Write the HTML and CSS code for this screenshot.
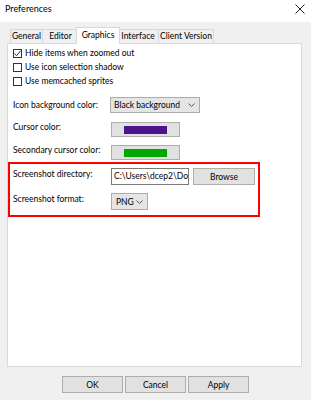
FILE: index.html
```html
<!DOCTYPE html>
<html>
<head>
<meta charset="utf-8">
<link rel="stylesheet" href="styles.css">
</head>
<body>
<div class="window">
  <div class="titlebar">
    <span class="title">Preferences</span>
    <svg class="close" width="10" height="10" viewBox="0 0 10 10"><path d="M0.5 0.5 L9.5 9.5 M9.5 0.5 L0.5 9.5" stroke="#222" stroke-width="1" fill="none"/></svg>
  </div>
  <div class="client">
    <div class="tabs">
      <div class="tab t-general">General</div>
      <div class="tab t-editor">Editor</div>
      <div class="tab t-graphics active">Graphics</div>
      <div class="tab t-interface">Interface</div>
      <div class="tab t-client">Client Version</div>
    </div>
    <div class="panel">
      <div class="check-row">
        <span class="checkbox"><svg width="9" height="9" viewBox="0 0 9 9"><path d="M1.5 4.5 L3.5 6.8 L7.8 1.6" stroke="#333" stroke-width="1" fill="none"/></svg></span>
        <span>Hide items when zoomed out</span>
      </div>
      <div class="check-row">
        <span class="checkbox"></span>
        <span>Use icon selection shadow</span>
      </div>
      <div class="check-row">
        <span class="checkbox"></span>
        <span>Use memcached sprites</span>
      </div>

      <div class="form-row row-icon">
        <span class="label">Icon background color:</span>
        <div class="combo combo-wide"><span class="combo-text">Black background</span><svg class="chev" width="7" height="4" viewBox="0 0 7 4"><path d="M0.5 0.5 L3.5 3.5 L6.5 0.5" stroke="#555" fill="none"/></svg></div>
      </div>
      <div class="form-row row-cursor">
        <span class="label">Cursor color:</span>
        <div class="btn color-btn"><span class="swatch purple"></span></div>
      </div>
      <div class="form-row row-second">
        <span class="label">Secondary cursor color:</span>
        <div class="btn color-btn"><span class="swatch green"></span></div>
      </div>

      <div class="highlight">
        <div class="form-row row-dir">
          <span class="label">Screenshot directory:</span>
          <div class="textbox"><span>C:\Users\dcep2\Do</span></div>
          <div class="btn browse">Browse</div>
        </div>
        <div class="form-row row-format">
          <span class="label">Screenshot format:</span>
          <div class="combo combo-small"><span class="combo-text">PNG</span><svg class="chev" width="7" height="4" viewBox="0 0 7 4"><path d="M0.5 0.5 L3.5 3.5 L6.5 0.5" stroke="#555" fill="none"/></svg></div>
        </div>
      </div>
    </div>
    <div class="buttons">
      <div class="btn dlg">OK</div>
      <div class="btn dlg">Cancel</div>
      <div class="btn dlg">Apply</div>
    </div>
  </div>
</div>
</body>
</html>
```
FILE: styles.css
```css
* { box-sizing: border-box; }
html, body { margin: 0; padding: 0; }
body {
  width: 311px;
  height: 400px;
  background: #f0f0f0;
  font-family: "Lato", "Noto Sans", sans-serif;
  font-size: 8.5px;
  color: #000;
  overflow: hidden;
}
.window { width: 311px; height: 400px; display: flex; flex-direction: column; }
.titlebar {
  height: 22px;
  background: #ffffff;
  display: flex;
  align-items: center;
  justify-content: space-between;
  padding: 0 6px 4px 5px;
}
.title { font-size: 9px; line-height: 12px; }
.close { display: block; }
.client { flex: 1; display: flex; flex-direction: column; }
.tabs {
  display: flex;
  align-items: flex-end;
  height: 16px;
  margin-top: 5px;
  padding-left: 10px;
  position: relative;
  z-index: 2;
}
.tab {
  height: 14px;
  line-height: 13px;
  text-align: center;
  border: 1px solid #d9d9d9;
  border-bottom: none;
  border-right: none;
  background: #f0f0f0;
  white-space: nowrap;
  flex: none;
}
.t-general { width: 32px; }
.t-editor { width: 36px; }
.t-graphics { width: 40px; }
.t-interface { width: 40px; }
.t-client { width: 56px; }
.tab:last-child { border-right: 1px solid #d9d9d9; }
.tab.active {
  width: 44px;
  height: 17px;
  margin: 0 -2px -1px;
  background: #fff;
  border-right: 1px solid #d9d9d9;
  line-height: 14px;
  position: relative;
  z-index: 3;
}
.tab.active + .tab { border-left: none; }
.panel {
  margin-left: 7px;
  width: 295px;
  height: 324px;
  background: #fff;
  border: 1px solid #d9d9d9;
  padding: 2px 5px 0 5px;
  position: relative;
  z-index: 1;
}
.check-row {
  height: 14px;
  display: flex;
  align-items: center;
  gap: 3px;
  line-height: 12px;
  white-space: nowrap;
}
.checkbox {
  width: 9px;
  height: 9px;
  border: 1px solid #333;
  background: #fff;
  display: flex;
  align-items: center;
  justify-content: center;
  flex: none;
}
.checkbox svg { display: block; margin: -1px; }
.form-row {
  display: flex;
  align-items: flex-start;
}
.label {
  width: 98px;
  flex: none;
  line-height: 11px;
  white-space: nowrap;
}
.row-icon { margin-top: 9px; align-items: center; }
.row-icon .label { width: 97px; }
.row-cursor { margin-top: 9px; }
.row-second { margin-top: 8px; }
.btn {
  background: #e1e1e1;
  border: 1px solid #adadad;
  display: flex;
  align-items: center;
  justify-content: center;
  white-space: nowrap;
}
.color-btn { width: 69px; height: 15px; }
.swatch { display: block; width: 43px; height: 8px; }
.purple { background: #4b148a; }
.green { background: #00a800; }
.combo {
  background: #e5e5e5;
  border: 1px solid #acacac;
  display: flex;
  align-items: center;
  justify-content: space-between;
  padding: 0 4px 0 3px;
  line-height: 12px;
  white-space: nowrap;
}
.combo-wide { width: 90px; height: 16px; }
.combo-small { width: 37px; height: 17px; padding: 0 4px 0 4px; }
.chev { display: block; flex: none; }
.highlight {
  margin: 2px 0 0 -5px;
  width: 252px;
  border: 2px solid #ff0000;
  padding: 4px 3px 5px 3px;
}
.textbox {
  width: 78px;
  height: 17px;
  border: 1px solid #7a7a7a;
  background: #fff;
  padding: 0 2px;
  line-height: 15px;
  overflow: hidden;
  white-space: nowrap;
}
.browse { width: 62px; height: 17px; margin-left: 4px; line-height: 12px; }
.row-dir .label { padding-top: 1px; }
.row-format { margin-top: 8px; }
.row-format .label { padding-top: 1px; }
.buttons {
  display: flex;
  gap: 2px;
  margin-top: 9px;
  padding-left: 62px;
}
.dlg { width: 61px; height: 17px; line-height: 12px; }
```
